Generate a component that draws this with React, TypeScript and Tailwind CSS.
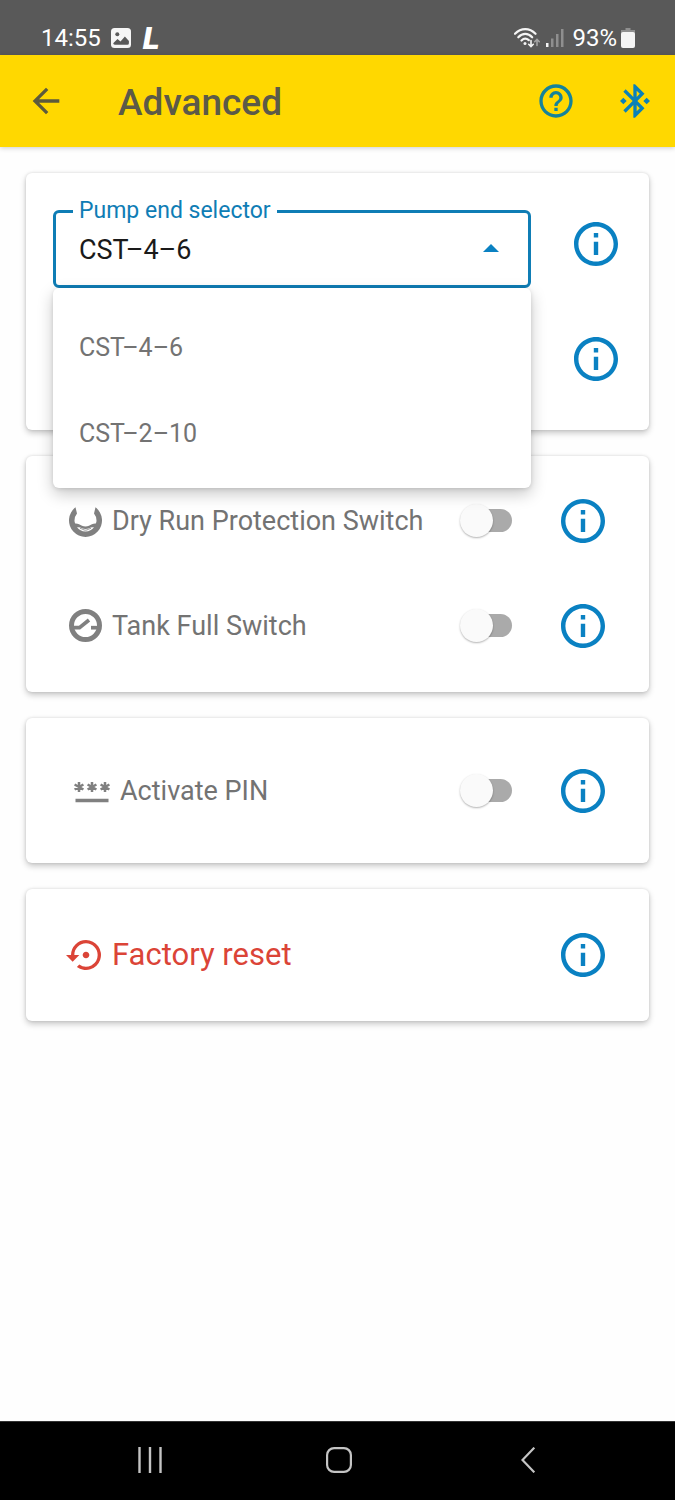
import { useState } from 'react';
import { MdArrowBack, MdBluetoothConnected, MdHelpOutline, MdSettingsBackupRestore } from 'react-icons/md';

const pumpEnds = ['CST–4–6', 'CST–2–10'];

function StatusBar() {
  return (
    <div className="flex items-center justify-between bg-[#595959] pl-[41px] pr-10 pt-[22px] pb-px text-2xl/8 text-white">
      <div className="flex items-center">
        <span>14:55</span>
        <svg className="ml-2.5 size-5" viewBox="0 0 20 20">
          <rect width="20" height="20" rx="3.5" fill="#f5f5f5" />
          <circle cx="6.3" cy="6.2" r="2" fill="#595959" />
          <path d="M2.2 15.2 6.5 11l3 2.6 4.4-5 4 4.4v2.2q0 1.6-1.6 1.6H3.8q-1.6 0-1.6-1.8z" fill="#595959" />
        </svg>
        <span className="ml-3 text-[32px] leading-8 font-black italic">L</span>
      </div>
      <div className="flex items-center">
        <svg className="h-5 w-[26px]" viewBox="0 0 26 20" fill="none" stroke="#f5f5f5" strokeWidth="2.2" strokeLinecap="round">
          <path d="M1 5.8C7-.4 15.5-.4 21.5 5.8" />
          <path d="M4.3 9.3C8.5 4.8 14 4.8 18.2 9.3" />
          <path d="M7.5 12.5C9.8 10.2 12.5 10.2 14.8 12.2" />
          <circle cx="11" cy="15.5" r="1.5" fill="#f5f5f5" stroke="none" />
          <path d="M17 12.5v6m-2.3-2.2 2.3 2.3 2.3-2.3" strokeWidth="1.6" />
          <path d="M23 17.5v-6m-2.3 2.2 2.3-2.3 2.3 2.3" stroke="#a3a3a3" strokeWidth="1.6" />
        </svg>
        <svg className="ml-1.5 h-5 w-[18px]" viewBox="0 0 18 20">
          <path d="M0 15h2.5v4H0z" fill="#f5f5f5" />
          <path d="M5 10.500h2.500V19H5zM10 6h2.500v13H10zM15 1h2.500v18H15z" fill="#8f8f8f" />
        </svg>
        <span className="ml-2">93%</span>
        <svg className="ml-1 h-5 w-3.5" viewBox="0 0 14 20">
          <path d="M4.500 0h5v2H14v4H0V2h4.500z" fill="#8f8f8f" />
          <rect y="4" width="14" height="16" rx="2" fill="#f5f5f5" />
        </svg>
      </div>
    </div>
  );
}

function InfoButton({ topic }: { topic: string }) {
  return (
    <button type="button" aria-label={`Info: ${topic}`} className="shrink-0 text-[#0a81c2]">
      <svg className="size-11" viewBox="2 2 20 20" fill="currentColor">
        <path d="M11 7h2v2h-2zm0 4h2v6h-2zm1-9C6.480 2 2 6.480 2 12s4.480 10 10 10 10-4.480 10-10S17.520 2 12 2zm0 18c-4.410 0-8-3.590-8-8s3.590-8 8-8 8 3.590 8 8-3.590 8-8 8z" />
      </svg>
    </button>
  );
}

function Card({ className, children }: { className: string; children: React.ReactNode }) {
  return (
    <section className={`rounded-md bg-white shadow-[0_3px_6px_rgba(0,0,0,0.22),0_0_3px_rgba(0,0,0,0.12)] ${className}`}>
      {children}
    </section>
  );
}

function SwitchRow({ id, label, icon }: { id: string; label: string; icon: React.ReactNode }) {
  const [on, setOn] = useState(false);
  return (
    <div className="flex h-[105px] items-center pl-[43px] pr-11">
      <label htmlFor={id} className="flex flex-1 items-center gap-2.5 text-[27px]/8 text-[#737373]">
        {icon}
        {label}
      </label>
      <input
        id={id}
        type="checkbox"
        checked={on}
        onChange={e => setOn(e.target.checked)}
        className="h-[23px] w-[43px] shrink-0 appearance-none rounded-full bg-[#aaaaaa] before:block before:size-[33px] before:-translate-x-[9px] before:-translate-y-[5px] before:rounded-full before:bg-[#fafafa] before:shadow-[0_1px_2px_rgba(0,0,0,0.3)] before:transition checked:bg-[#85c0e0] checked:before:translate-x-[19px] checked:before:bg-[#0a81c2]"
      />
      <div className="ml-[49px] flex">
        <InfoButton topic={label} />
      </div>
    </div>
  );
}

function DryRunIcon() {
  return (
    <svg className="size-[33px]" viewBox="0 0 33 33" fill="#808080">
      <path d="M6.5 3.300A16.500 16.500 0 1 0 26.500 3.300L25 9.500A11 11 0 1 1 8 9.500z" />
      <path d="M4.500 20c3.500-1.300 6 .8 8.500 1.700 2.300.9 4.700.9 7 0 2.500-.9 5-3 8.500-1.700L26 27l-9.500 4L7 27z" />
      <path d="M8 23.300c3.500-.6 5.500 1.700 8.500 1.700s5-2.300 8.500-1.700c-2 2.700-4.800 4.200-8.500 4.200S10 26 8 23.300z" fill="#fff" />
      <path d="M11 24.300c2 .4 3.500 1.900 5.500 1.900s3.500-1.500 5.500-1.900" fill="none" stroke="#808080" strokeWidth=".8" />
    </svg>
  );
}

function TankFullIcon() {
  return (
    <svg className="size-[33px]" viewBox="0 0 33 33" fill="none" stroke="#808080">
      <circle cx="16.500" cy="16.500" r="14" strokeWidth="5" />
      <path d="M4 18.700h6.500L20 11" strokeWidth="3.700" />
      <path d="M22 18.700h7" strokeWidth="3.700" />
    </svg>
  );
}

function PinIcon() {
  return (
    <svg className="ml-[5px] h-6 w-9" viewBox="0 0 36 24" fill="none" stroke="#808080">
      <path
        d="M5 3v10M.6 5.500l8.800 5M9.400 5.500l-8.800 5M18 3v10M13.600 5.500l8.800 5M22.400 5.500l-8.800 5M31 3v10M26.600 5.500l8.800 5M35.400 5.500l-8.800 5"
        strokeWidth="2.500"
      />
      <path d="M1.500 21.500h33" strokeWidth="3.500" />
    </svg>
  );
}

export default function App() {
  const [pumpEnd, setPumpEnd] = useState(pumpEnds[0]);
  const [menuOpen, setMenuOpen] = useState(true);

  const choose = (value: string) => {
    setPumpEnd(value);
    setMenuOpen(false);
  };

  return (
    <div className="flex min-h-screen flex-col bg-[#fefefe] font-[Roboto,sans-serif]">
      <StatusBar />
      <header className="flex h-[92px] items-center bg-[#ffd800] pl-[26px] pr-5 shadow-[0_1px_5px_rgba(0,0,0,0.2)]">
        <button type="button" aria-label="Back" className="text-[#5c5a3c]">
          <MdArrowBack className="size-10" />
        </button>
        <h1 className="ml-[52px] flex-1 pt-1 text-[37px] font-medium text-[#5c5a48]">Advanced</h1>
        <button type="button" aria-label="Help" className="text-[#15839b]">
          <MdHelpOutline className="size-10" />
        </button>
        <button type="button" aria-label="Bluetooth" className="ml-[39px] text-[#0a81b8]">
          <MdBluetoothConnected className="size-10" />
        </button>
      </header>

      <main className="flex flex-1 flex-col gap-[26px] p-[26px]">
        <Card className="pt-[26px] pr-[31px] pb-[49px] pl-[27px]">
          <div className="flex items-center gap-[43px]">
            <div className="relative flex-1">
              <fieldset className="rounded-md border-3 border-[#0f7db5]">
                <legend className="ml-[17px] px-1.5 text-[23px]/6 text-[#0f7db5]">
                  <label htmlFor="pumpEnd">Pump end selector</label>
                </legend>
                <div className="flex items-center pr-[29px] pb-3">
                  <select
                    id="pumpEnd"
                    value={pumpEnd}
                    onChange={e => choose(e.target.value)}
                    onMouseDown={e => { e.preventDefault(); setMenuOpen(!menuOpen); }}
                    className="h-[50px] flex-1 appearance-none bg-transparent pt-1 pl-[23px] text-[27px] text-[#1a1a1a] outline-none"
                  >
                    {pumpEnds.map(p => <option key={p}>{p}</option>)}
                  </select>
                  <svg className="h-2 w-4" viewBox="0 0 16 8">
                    <path d="M0 8 8 0l8 8z" fill="#0a81c2" />
                  </svg>
                </div>
              </fieldset>
              {menuOpen && (
                <ul className="absolute inset-x-0 top-full z-10 rounded-md bg-white pt-4 pb-3 shadow-[0_6px_16px_rgba(0,0,0,0.22),0_1px_4px_rgba(0,0,0,0.12)]">
                  {pumpEnds.map(p => (
                    <li key={p}>
                      <button type="button" onClick={() => choose(p)}
                        className="h-[86px] w-full px-[26px] pt-0.5 text-left text-[25px] text-[#737373]">
                        {p}
                      </button>
                    </li>
                  ))}
                </ul>
              )}
            </div>
            <InfoButton topic="Pump end selector" />
          </div>
          <div className="mt-[49px] flex justify-end">
            <InfoButton topic="Pump end" />
          </div>
        </Card>

        <Card className="pt-3 pb-3.5">
          <SwitchRow id="dryRun" label="Dry Run Protection Switch" icon={<DryRunIcon />} />
          <SwitchRow id="tankFull" label="Tank Full Switch" icon={<TankFullIcon />} />
        </Card>

        <Card className="py-5">
          <SwitchRow id="activatePin" label="Activate PIN" icon={<PinIcon />} />
        </Card>

        <Card className="flex items-center justify-between py-11 pr-11 pl-10">
          <button type="button" className="flex items-center gap-1.5 text-[31px]/10 text-[#db4437]">
            <MdSettingsBackupRestore className="size-10" />
            Factory reset
          </button>
          <InfoButton topic="Factory reset" />
        </Card>
      </main>

      <nav className="grid h-[79px] grid-cols-3 items-center justify-items-center border-t border-[#333333] bg-black pr-[53px] pb-0.5 pl-14">
        <button type="button" aria-label="Recent apps">
          <svg className="h-[26px] w-6" viewBox="0 0 24 26" stroke="#c4c4c4" strokeWidth="2.400">
            <path d="M1.500 0v26M12 0v26M22.500 0v26" />
          </svg>
        </button>
        <button type="button" aria-label="Home">
          <svg className="size-[26px]" viewBox="0 0 26 26" fill="none" stroke="#c4c4c4" strokeWidth="2.200">
            <rect x="1.100" y="1.100" width="23.800" height="23.800" rx="7" />
          </svg>
        </button>
        <button type="button" aria-label="Back to previous app">
          <svg className="h-[26px] w-3.5" viewBox="0 0 14 26" fill="none" stroke="#c4c4c4" strokeWidth="2.200">
            <path d="M13.300.7 1.500 13l11.800 12.300" />
          </svg>
        </button>
      </nav>
    </div>
  );
}
